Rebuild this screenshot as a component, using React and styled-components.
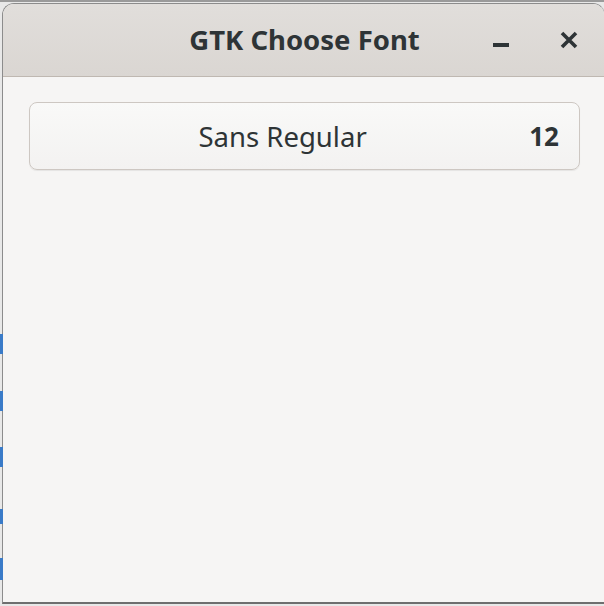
import React from "react";
import styled, { createGlobalStyle } from "styled-components";

const Global = createGlobalStyle`
  html, body {
    margin: 0;
    padding: 0;
    width: 604px;
    height: 606px;
    overflow: hidden;
    background: #d4d4d4;
  }
`;

const Desktop = styled.div`
  position: relative;
  width: 604px;
  height: 606px;
  padding: 3px 0 0 2px;
  box-sizing: border-box;
  overflow: hidden;
  background: #e8e8e8;
`;

const Mark = styled.div`
  position: absolute;
  left: 0;
  width: 3px;
  background: #3a7bc8;
`;

const Window = styled.div`
  width: 603px;
  height: 601px;
  display: flex;
  flex-direction: column;
  border: 1px solid #8c8c8c;
  border-right-color: #b8b8b8;
  border-bottom: 2px solid #6e6e6e;
  border-radius: 12px 12px 0 0;
  overflow: hidden;
  background: #f6f5f4;
  font-family: "Noto Sans", "Open Sans", sans-serif;
  color: #2e3436;
  box-sizing: border-box;
`;

const TitleBar = styled.div`
  height: 73px;
  flex: none;
  position: relative;
  display: flex;
  align-items: center;
  justify-content: center;
  background: linear-gradient(#e1dedb, #dad6d2);
  border-bottom: 1px solid #bfb8b1;
  box-sizing: border-box;
`;

const Title = styled.div`
  font-size: 27.5px;
  font-weight: 700;
  margin-left: 2px;
  margin-top: -2px;
`;

const Controls = styled.div`
  position: absolute;
  right: 0;
  top: 0;
  height: 100%;
  display: flex;
  align-items: center;
  gap: 50px;
  padding-right: 26px;
`;

const Control = styled.div`
  width: 18px;
  height: 18px;
  display: flex;
  align-items: center;
  justify-content: center;
`;

const Content = styled.div`
  flex: 1;
  padding: 25px 26px 0 26px;
`;

const FontButton = styled.button`
  width: 551px;
  height: 68px;
  display: flex;
  align-items: center;
  padding: 0 20px 0 0;
  border: 1px solid #cdc7c2;
  border-radius: 8px;
  background: linear-gradient(#f9f9f8, #f3f2f1);
  box-shadow: 0 1px 1px rgba(0, 0, 0, 0.07);
  font-family: inherit;
  color: #2e3436;
  box-sizing: border-box;
`;

const FontName = styled.span`
  flex: 1;
  text-align: center;
  font-size: 27.5px;
  font-weight: 400;
  padding-left: 6px;
`;

const FontSize = styled.span`
  font-size: 26px;
  font-weight: 700;
`;

export default function App() {
  return (
    <>
      <Global />
      <Desktop>
        <Mark style={{ top: 0, height: 2, background: "#9a9a9a", width: 604 }} />
        <Mark style={{ top: 334, height: 20 }} />
        <Mark style={{ top: 391, height: 20 }} />
        <Mark style={{ top: 447, height: 20 }} />
        <Mark style={{ top: 509, height: 15 }} />
        <Mark style={{ top: 558, height: 22 }} />
        <Window>
          <TitleBar>
            <Title>GTK Choose Font</Title>
            <Controls>
              <Control>
                <svg width="18" height="18" viewBox="0 0 18 18">
                  <rect x="1" y="12" width="16" height="4" fill="#2e3436" />
                </svg>
              </Control>
              <Control>
                <svg width="18" height="18" viewBox="0 0 18 18">
                  <path d="M2 2 L16 16 M16 2 L2 16" stroke="#2e3436" strokeWidth="3.6" />
                </svg>
              </Control>
            </Controls>
          </TitleBar>
          <Content>
            <FontButton>
              <FontName>Sans Regular</FontName>
              <FontSize>12</FontSize>
            </FontButton>
          </Content>
        </Window>
      </Desktop>
    </>
  );
}
